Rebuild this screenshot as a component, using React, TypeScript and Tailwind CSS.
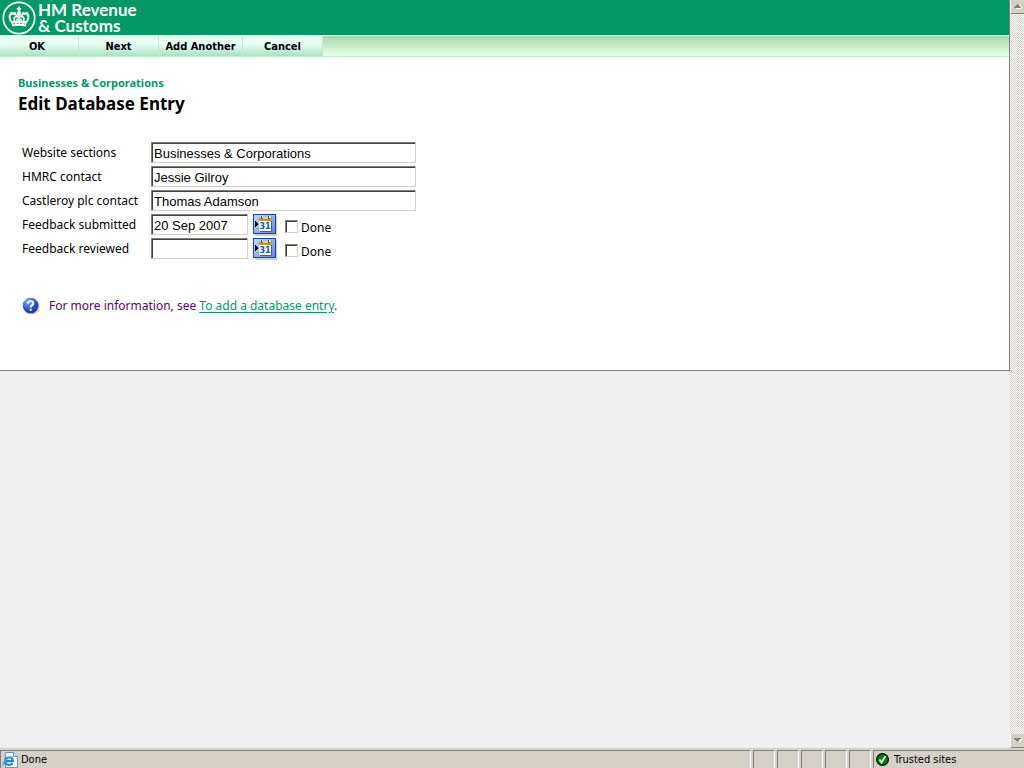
import { useState } from "react";

const textFields = [
  { id: "sections", label: "Website sections", value: "Businesses & Corporations" },
  { id: "hmrc", label: "HMRC contact", value: "Jessie Gilroy" },
  { id: "castleroy", label: "Castleroy plc contact", value: "Thomas Adamson" },
];

const dateFields = [
  { id: "submitted", label: "Feedback submitted", value: "20 Sep 2007" },
  { id: "reviewed", label: "Feedback reviewed", value: "" },
];

const sunken = "border border-t-[#808080] border-l-[#808080] border-r-[#d4d0c8] border-b-[#d4d0c8] shadow-[inset_1px_1px_0_#404040]";
const inputStyle = "h-[21px] bg-white px-[2px] pt-[2px] font-['Liberation_Sans',sans-serif] text-[13px] leading-4 text-black outline-none";

function CrownLogo() {
  return (
    <svg width="34" height="34" viewBox="0 0 34 34" fill="none" stroke="#fff" aria-hidden="true">
      <circle cx="17" cy="17" r="15.7" strokeWidth="1.7" />
      <path d="M10.5 22C6.8 18.5 6.6 13.4 10 12.7C12.8 12.2 14.8 14 15.4 16.5M23.5 22C27.2 18.5 27.4 13.4 24 12.7C21.2 12.2 19.2 14 18.6 16.5" strokeWidth="1.9" />
      <path d="M13.2 21C11.2 18.5 12 16 14 15.2M20.8 21C22.8 18.5 22 16 20 15.2M17 12V21M14.8 7.8H19.2M17 5.4V11" strokeWidth="1.7" />
      <g fill="#fff" stroke="none">
        <circle cx="17" cy="12" r="2.2" />
        <circle cx="9.4" cy="12.2" r="1.5" />
        <circle cx="24.6" cy="12.2" r="1.5" />
        <circle cx="12.6" cy="12.2" r="1.3" />
        <circle cx="21.4" cy="12.2" r="1.3" />
        <circle cx="15" cy="18.6" r="1.1" />
        <circle cx="19" cy="18.6" r="1.1" />
        <path d="M9.5 20.3Q17 18.6 24.5 20.3L24 25.6Q17 24 10 25.6Z" />
      </g>
      <path d="M11.2 22.9Q17 21.6 22.8 22.9" stroke="#009966" strokeWidth="1" strokeDasharray="2 1.5" />
    </svg>
  );
}

function CalendarIcon() {
  return (
    <svg width="24" height="23" viewBox="0 0 24 23" shapeRendering="crispEdges" aria-hidden="true">
      <defs>
        <linearGradient id="calBg" x1="0" y1="0" x2="1" y2="1">
          <stop offset="0" stopColor="#c4dcfc" />
          <stop offset="1" stopColor="#5b86dc" />
        </linearGradient>
      </defs>
      <path d="M2 2H24V22H2Z" fill="#c8ccd4" />
      <path d="M.5 .5H22.5V19.5H.5Z" fill="url(#calBg)" stroke="#1446b4" />
      <path d="M2 6V14L5 10Z" fill="#000" />
      <path d="M6 7H18V17H6Z" fill="#fff" />
      <path d="M18 7H19V18H7V17H18Z" fill="#3a62a8" />
      <path d="M6 3H19V7H6Z" fill="#b8962e" />
      <path d="M7 3H18V5H7Z" fill="#e8cf6a" />
      <path d="M8 2H10V5H8ZM15 2H17V5H15Z" fill="#685420" />
      <path d="M9 2H10V4H9ZM16 2H17V4H16Z" fill="#fff4b0" />
      <text x="12" y="15" textAnchor="middle" fontFamily="DejaVu Sans, sans-serif" fontSize="8" fontWeight="bold" fill="#0a50d0">31</text>
    </svg>
  );
}

function HelpIcon() {
  return (
    <svg width="18" height="18" viewBox="0 0 18 18" aria-hidden="true">
      <defs>
        <radialGradient id="helpBg" cx=".35" cy=".25" r=".8">
          <stop offset="0" stopColor="#8db4f2" />
          <stop offset=".6" stopColor="#245bc7" />
          <stop offset="1" stopColor="#0b2f86" />
        </radialGradient>
      </defs>
      <circle cx="9.5" cy="9.5" r="8" fill="#b9bcc4" />
      <circle cx="8.5" cy="8.5" r="7.8" fill="url(#helpBg)" />
      <path d="M6 6.5C6 3.3 11.3 3.4 11.3 6.4C11.3 8.4 8.7 8.3 8.7 10.5M8.7 11.8V13.7" fill="none" stroke="#fff" strokeWidth="1.9" />
    </svg>
  );
}

function PageIcon() {
  return (
    <svg width="16" height="16" viewBox="0 0 16 16" aria-hidden="true">
      <path d="M3.5 .5H11.5L15.5 4.5V15.5H3.5Z" fill="#fff" stroke="#6c8fc4" />
      <path d="M11.5 .5V4.5H15.5" fill="#cfe0f8" stroke="#6c8fc4" />
      <path d="M10.5 11C8.7 14.2 3 13.3 3 9C3 4.5 10.8 4.2 11 9.1H4" fill="none" stroke="#1b87dc" strokeWidth="2.1" />
      <path d="M1.2 13.8C-.2 11.5 5.5 4 12.3 4.8" fill="none" stroke="#48a8ee" strokeWidth="1.1" />
    </svg>
  );
}

function TickIcon() {
  return (
    <svg width="13" height="13" viewBox="0 0 13 13" aria-hidden="true">
      <circle cx="6.5" cy="6.5" r="5.9" fill="#008000" stroke="#000" strokeWidth="1.1" />
      <path d="M3.5 6.5L5.5 9.5L9.3 3.3" fill="none" stroke="#fff" strokeWidth="1.7" />
    </svg>
  );
}

function TrackTexture() {
  return (
    <svg className="min-h-0 w-full flex-1" shapeRendering="crispEdges" aria-hidden="true">
      <defs>
        <pattern id="track" width="2" height="2" patternUnits="userSpaceOnUse">
          <path d="M0 0H2V2H0Z" fill="#fff" />
          <path d="M0 0H1V1H0ZM1 1H2V2H1Z" fill="#d4d0c8" />
        </pattern>
      </defs>
      <rect width="100%" height="100%" fill="url(#track)" />
    </svg>
  );
}

function ScrollButton({ up }: { up?: boolean }) {
  return (
    <button
      type="button"
      aria-label={up ? "Scroll up" : "Scroll down"}
      className="flex h-[14px] w-full items-center justify-center border-b border-l border-b-[#808080] border-l-white bg-[#d4d0c8]"
    >
      <svg width="8" height="5" viewBox="0 0 8 5" shapeRendering="crispEdges">
        <path d={up ? "M1 5H8V4L5 1Z" : "M1 1H8L5 5Z"} fill="#fff" />
        <path d={up ? "M0 4H7L3.5 0Z" : "M0 0H7L3.5 4Z"} fill="#808080" />
      </svg>
    </button>
  );
}

function NavButton({ label, width }: { label: string; width: string }) {
  return (
    <button
      type="button"
      className={`${width} border-r border-[#b9ecc8] bg-linear-to-b from-[#e8fff0] from-40% to-[#a8dfc8] pt-px text-center font-['DejaVu_Sans_Condensed','DejaVu_Sans',sans-serif] text-[11px] leading-4 font-bold text-black`}
    >
      {label}
    </button>
  );
}

export default function App() {
  const [values, setValues] = useState<Record<string, string>>(
    Object.fromEntries([...textFields, ...dateFields].map((f) => [f.id, f.value]))
  );

  const update = (id: string, value: string) => setValues({ ...values, [id]: value });

  return (
    <div className="flex h-screen flex-col bg-[#efefef] font-['Noto_Sans',sans-serif] text-[12px] text-black">
      <div className="flex min-h-0 flex-1">
        <div className="min-w-0 flex-1">
          <div className="border-r border-b border-[#808080] bg-white">
            <header className="flex h-[35px] items-center gap-[2px] bg-[#009966] pl-[2px]">
              <CrownLogo />
              <div className="font-['Lato',sans-serif] text-[17px] leading-4 font-bold text-white">
                <div>HM Revenue</div>
                <div>&amp; Customs</div>
              </div>
            </header>

            <nav className="flex h-[22px] border-t border-b border-t-[#e8fff0] border-b-[#b9f0c8] bg-linear-to-b from-[#a3d8ab] to-[#e8ffec]">
              <NavButton label="OK" width="w-[79px] pr-1" />
              <NavButton label="Next" width="w-20" />
              <NavButton label="Add Another" width="w-[84px]" />
              <NavButton label="Cancel" width="w-20" />
            </nav>

            <main className="px-[18px] pt-[18px] pb-[54px]">
              <p className="text-[11px] leading-4 font-bold text-[#009966]">Businesses &amp; Corporations</p>
              <h1 className="mt-px text-[17px] leading-6 font-bold">Edit Database Entry</h1>

              <form className="mt-[26px] flex flex-col gap-[3px] pl-1">
                {textFields.map((f) => (
                  <div key={f.id} className="flex h-[21px]">
                    <label htmlFor={f.id} className="w-[129px] leading-[22px]">{f.label}</label>
                    <input
                      id={f.id}
                      value={values[f.id]}
                      onChange={(e) => update(f.id, e.target.value)}
                      className={`w-[265px] ${inputStyle} ${sunken}`}
                    />
                  </div>
                ))}
                {dateFields.map((f) => (
                  <div key={f.id} className="flex h-[21px]">
                    <label htmlFor={f.id} className="w-[129px] leading-[22px]">{f.label}</label>
                    <input
                      id={f.id}
                      value={values[f.id]}
                      onChange={(e) => update(f.id, e.target.value)}
                      className={`w-[97px] ${inputStyle} ${sunken}`}
                    />
                    <button type="button" aria-label={`Pick date: ${f.label}`} className="ml-[5px] h-[23px]">
                      <CalendarIcon />
                    </button>
                    <label className="ml-2 flex h-6 items-center gap-[3px]">
                      <input type="checkbox" className={`size-[13px] appearance-none bg-white checked:bg-gray-600 ${sunken}`} />
                      <span className="pt-[3px]">Done</span>
                    </label>
                  </div>
                ))}
              </form>

              <div className="mt-[37px] flex items-center gap-[9px] pl-1 text-[#660066]">
                <HelpIcon />
                <p className="leading-5">
                  For more information, see{" "}
                  <a href="#help" className="text-[#009966] underline underline-offset-2">To add a database entry</a>.
                </p>
              </div>
            </main>
          </div>
        </div>

        <div className="flex w-[14px] flex-col">
          <ScrollButton up />
          <TrackTexture />
          <ScrollButton />
        </div>
      </div>

      <footer className="flex h-5 gap-[2px] bg-[#d4d0c8] pt-[2px] font-['DejaVu_Sans_Condensed','DejaVu_Sans',sans-serif] text-[11px] leading-4">
        <div className="flex flex-1 items-center gap-[3px] border-t border-r border-l border-t-[#808080] border-r-white border-l-[#808080] pl-px">
          <PageIcon />
          Done
        </div>
        <div className="flex gap-[2px]">
          {[0, 1, 2, 3, 4].map((n) => (
            <div key={n} className="w-[22px] border-t border-r border-l border-t-[#808080] border-r-white border-l-[#808080]" />
          ))}
        </div>
        <div className="flex w-[151px] items-center gap-[5px] border-t border-l border-[#808080] pl-[2px]">
          <TickIcon />
          Trusted sites
        </div>
      </footer>
    </div>
  );
}
